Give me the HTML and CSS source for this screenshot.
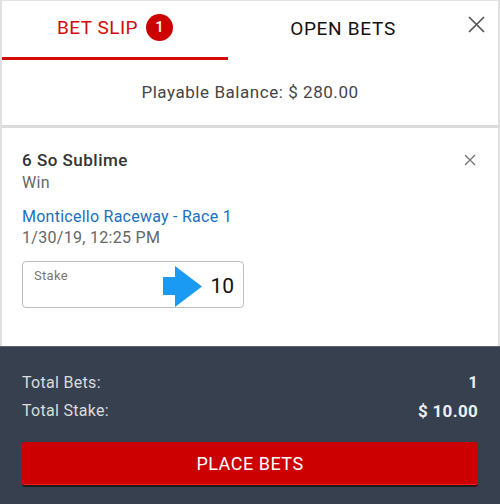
FILE: index.html
```html
<!DOCTYPE html>
<html>
<head>
<meta charset="utf-8">
<link rel="stylesheet" href="styles.css">
</head>
<body>
<div class="app">
  <div class="tabs">
    <div class="tab tab-active">
      <span class="tab-label">BET SLIP</span>
      <span class="badge">1</span>
    </div>
    <div class="tab">
      <span class="tab-label tab-label-dark">OPEN BETS</span>
    </div>
    <div class="tab-close">
      <svg width="17" height="17" viewBox="0 0 17 17"><path d="M1 1 L16 16 M16 1 L1 16" stroke="#555" stroke-width="1.7" fill="none"/></svg>
    </div>
  </div>
  <div class="balance">Playable Balance: $ 280.00</div>
  <div class="divider"></div>
  <div class="card">
    <div class="card-head">
      <div class="runner">6 So Sublime</div>
      <svg class="card-close" width="12" height="12" viewBox="0 0 12 12"><path d="M1 1 L11 11 M11 1 L1 11" stroke="#777" stroke-width="1.3" fill="none"/></svg>
    </div>
    <div class="bet-type">Win</div>
    <div class="race">Monticello Raceway - Race 1</div>
    <div class="date">1/30/19, 12:25 PM</div>
    <div class="stake">
      <span class="stake-label">Stake</span>
      <svg class="arrow" width="39" height="41" viewBox="0 0 39 41"><path d="M0 11 H12 V0 L39 20.5 L12 41 V29 H0 Z" fill="#1a9af3"/></svg>
      <span class="stake-value">10</span>
    </div>
  </div>
  <div class="footer">
    <div class="row"><span>Total Bets:</span><span class="row-val">1</span></div>
    <div class="row row-2"><span>Total Stake:</span><span class="row-val row-val-lg">$ 10.00</span></div>
    <button class="place">PLACE BETS</button>
  </div>
</div>
</body>
</html>
```
FILE: styles.css
```css
* { box-sizing: border-box; }
html, body { margin: 0; padding: 0; }
body {
  width: 500px;
  height: 504px;
  overflow: hidden;
  font-family: Roboto, "Noto Sans", "Liberation Sans", sans-serif;
  background: #fff;
}
.app {
  height: 504px;
  display: flex;
  flex-direction: column;
  border-left: 2px solid #e0e0e0;
  border-right: 2px solid #e0e0e0;
  border-top: 1px solid #e2e2e2;
}
.tabs {
  height: 59px;
  display: flex;
  flex: none;
}
.tab {
  width: 228px;
  display: flex;
  align-items: center;
  justify-content: center;
  padding-bottom: 4px;
}
.tab + .tab {
  width: 230px;
  padding-bottom: 4px;
}
.tab-active {
  width: 226px;
  border-bottom: 3px solid #d20a0a;
  padding-bottom: 4px;
}
.tab-label {
  font-size: 19px;
  color: #d20a0a;
  letter-spacing: 0.5px;
}
.tab-label-dark { color: #111; letter-spacing: 0.7px; }
.badge {
  width: 27px;
  height: 27px;
  border-radius: 50%;
  background: #cc0000;
  color: #fff;
  font-size: 15px;
  font-weight: 500;
  display: flex;
  align-items: center;
  justify-content: center;
  margin-left: 8px;
}
.tab-close {
  flex: 1;
  display: flex;
  justify-content: center;
  padding-top: 15px;
  padding-right: 4px;
}
.balance {
  height: 65px;
  flex: none;
  display: flex;
  align-items: center;
  justify-content: center;
  font-size: 17px;
  color: #444;
  letter-spacing: 0.55px;
  padding-bottom: 2px;
}
.divider {
  height: 3px;
  flex: none;
  background: #dcdcdc;
}
.card {
  height: 218px;
  flex: none;
  padding: 22px 20px 0 20px;
}
.card-head {
  display: flex;
  justify-content: space-between;
  align-items: flex-start;
}
.runner {
  font-size: 17px;
  font-weight: 500;
  color: #333;
  line-height: 20px;
  letter-spacing: 0.5px;
}
.card-close { margin-top: 4px; margin-right: 2px; }
.bet-type {
  font-size: 16px;
  color: #666;
  line-height: 20px;
  margin-top: 3px;
  letter-spacing: 0.3px;
}
.race {
  font-size: 16px;
  color: #1a6fc2;
  line-height: 20px;
  margin-top: 14px;
  letter-spacing: 0.25px;
}
.date {
  font-size: 16px;
  color: #666;
  line-height: 20px;
  margin-top: 1px;
  letter-spacing: 0.3px;
}
.stake {
  margin-top: 13px;
  width: 222px;
  height: 47px;
  border: 1px solid #bdbdbd;
  border-radius: 4px;
  display: flex;
  align-items: center;
  position: relative;
  padding: 0 9px 0 11px;
}
.stake-label {
  font-size: 13px;
  color: #777;
  align-self: flex-start;
  margin-top: 6px;
  flex: 1;
  letter-spacing: 0.3px;
}
.arrow { margin-right: 8px; margin-top: 4px; }
.stake-value {
  font-size: 21px;
  color: #111;
  margin-top: 2px;
}
.footer {
  flex: 1;
  background: #36404e;
  border-top: 1px solid #5a6270;
  margin: 0 -2px;
  padding: 26px 22px 0 22px;
}
.row {
  display: flex;
  justify-content: space-between;
  color: #dcdcdc;
  font-size: 16px;
  line-height: 20px;
  letter-spacing: 0.3px;
}
.row-2 { margin-top: 8px; }
.row-val { font-weight: 700; color: #eee; }
.row-val-lg { font-size: 17px; }
.place {
  margin-top: 21px;
  width: 100%;
  height: 43px;
  border: none;
  border-radius: 3px;
  background: #cc0000;
  box-shadow: 0 2px 0 #1e1e1e, inset 0 -1px 0 #ff1a1a;
  color: #fff;
  font-family: Roboto, "Noto Sans", "Liberation Sans", sans-serif;
  font-size: 18px;
  letter-spacing: 0.5px;
  padding: 0;
}
```
